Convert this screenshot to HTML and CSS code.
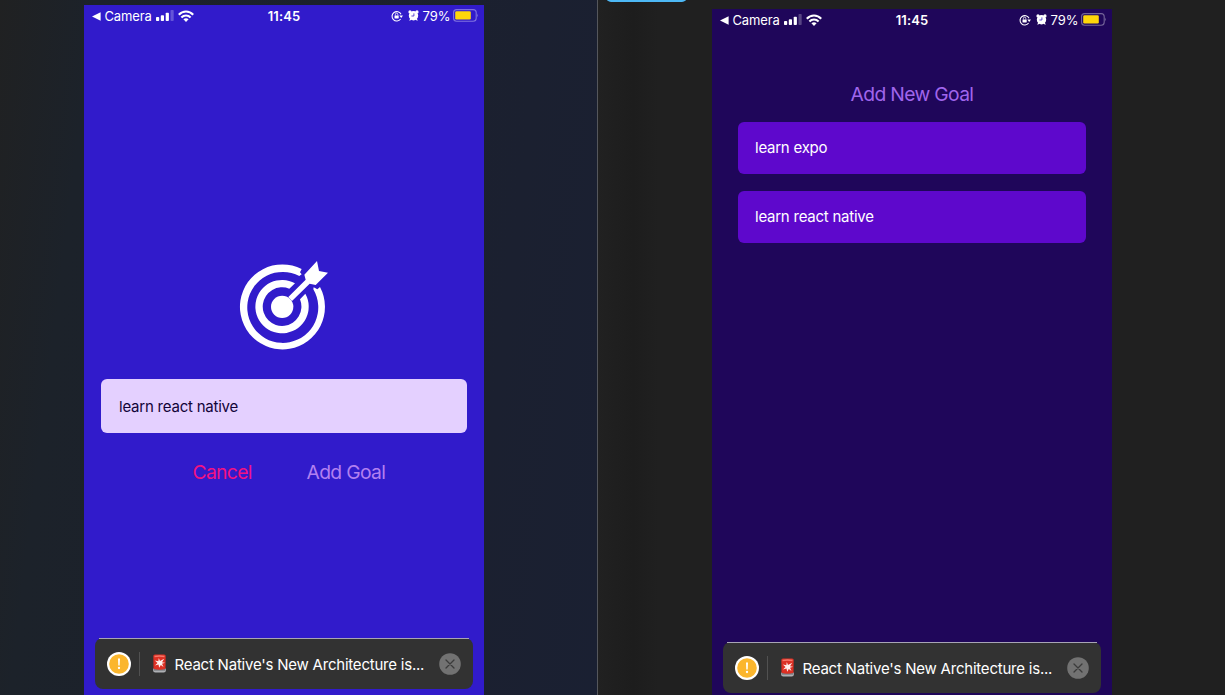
FILE: index.html
```
<!DOCTYPE html>
<html lang="en">
<head>
<meta charset="utf-8">
<title>Goals</title>
<link rel="stylesheet" href="styles.css">
</head>
<body>
<svg class="defs" aria-hidden="true">
  <symbol id="back" viewBox="0 0 9 9"><path d="M0 4.5 8.6 .3V8.7Z" fill="#fff"/></symbol>
  <symbol id="signal" viewBox="0 0 18 11" fill="#fff"><rect x="0" y="7" width="3.2" height="4" rx=".8"/><rect x="4.8" y="5.300" width="3.2" height="5.700" rx=".8"/><rect x="9.700" y="2.700" width="3.2" height="8.300" rx=".8"/><rect x="14.500" y="0" width="3.2" height="11" rx=".8" opacity=".25"/></symbol>
  <symbol id="wifi" viewBox="0 0 16 12"><path d="M.8 4.700C4.800 .4 11.200 .4 15.200 4.700M3.400 7.500C6 4.800 10 4.800 12.600 7.500" fill="none" stroke="#fff" stroke-width="2.100"/><path d="M5.400 9.300Q8 7.100 10.600 9.300L8 12Z" fill="#fff"/></symbol>
  <symbol id="lock" viewBox="0 0 12 12"><path d="M9.600 9A4.700 4.700 0 1 1 10 4.300" fill="none" stroke="#fff" stroke-width="1.100"/><path d="M8.300 5.400H12L10.200 8Z" fill="#fff"/><rect x="3.500" y="5.400" width="4.200" height="3.100" rx=".4" fill="#fff"/><path d="M4.400 5.500V4.400a1.200 1.200 0 0 1 2.400 0v1.100" fill="none" stroke="#fff" stroke-width=".8"/></symbol>
  <symbol id="alarm" viewBox="0 0 11 11"><circle cx="5.500" cy="5.700" r="4.700" fill="#fff"/><circle cx="2" cy="1.900" r="1.600" fill="#fff"/><circle cx="9" cy="1.900" r="1.600" fill="#fff"/><path d="M1.200 10.800l1-2.400 1.800 1.400ZM9.800 10.800l-1-2.400-1.800 1.400Z" fill="#fff"/><path d="M5.900 3.400V6H3.400" fill="none" stroke="#3a22c4" stroke-width=".8"/></symbol>
  <symbol id="battery" viewBox="0 0 26 13"><rect x=".6" y=".6" width="22.600" height="11.600" rx="3" fill="none" stroke="#fff" stroke-opacity=".38" stroke-width="1.100"/><rect x="2.200" y="2.200" width="15.600" height="8.400" rx="1.300" fill="#ffd60a"/><path d="M24.400 4.500q1.400 1.900 0 3.800Z" fill="#fff" opacity=".45"/></symbol>
  <symbol id="warn" viewBox="0 0 24 24"><circle cx="12" cy="12" r="12" fill="#fff"/><circle cx="12" cy="12" r="9.800" fill="#fbb62d"/><path d="M11 6.500h2l-.3 6.900h-1.400Z" fill="#fff"/><circle cx="12" cy="16" r="1.150" fill="#fff"/></symbol>
  <symbol id="siren" viewBox="0 0 14 19"><path d="M.6 14.500h12.800v1.800q0 2.200-2.200 2.200H2.800Q.6 18.500.6 16.300Z" fill="#aeb0b4"/><path d="M1.200 15.400h11.600v1H1.200Z" fill="#555960"/><path d="M.8 2Q.8.5 2.400.5h9.200Q13.200.5 13.200 2l-.2 12.800Q7 16.500 1 14.800Z" fill="#dd3024"/><path d="M2 1.700Q7 .7 12 1.700v1.500Q7 2.200 2 3.200Z" fill="#f7776a"/><path d="m7.500 7 4.200-2.200-2.200 3.500 3 .5-3 1 1.500 3.200L8.300 11l-1.600 2.800L6 10.600l-3.500 1 2.500-2.700L2.300 6.500l3.500.8.500-3.200Z" fill="#fff0ed"/></symbol>
  <symbol id="close" viewBox="0 0 22 22"><circle cx="11" cy="11" r="10.800" fill="#727272"/><path d="m7 7 8 8M15 7l-8 8" stroke="#3b3b3b" stroke-width="1.300" stroke-linecap="round"/></symbol>
</svg>

<div class="desktop">
  <section class="pane pane-left">
    <div class="phone phone-modal">
      <div class="status">
        <div class="status-side"><svg class="i-back"><use href="#back"/></svg><span class="camera">Camera</span><svg class="i-signal"><use href="#signal"/></svg><svg class="i-wifi"><use href="#wifi"/></svg></div>
        <span class="time">11:45</span>
        <div class="status-side status-right"><svg class="i-lock"><use href="#lock"/></svg><svg class="i-alarm"><use href="#alarm"/></svg><span class="percent">79%</span><svg class="i-battery"><use href="#battery"/></svg></div>
      </div>
      <div class="modal">
        <svg class="goal" viewBox="0 0 330 330" fill="#fff">
          <path d="M215 57A127.500 127.500 0 1 0 270 111L262 118 251 112 250 118A106.500 106.500 0 1 1 208 78L215 73 210 67Z"/>
          <path d="M195 100A80 80 0 1 0 226 131L210 148A58 58 0 1 1 178 116Z"/>
          <circle cx="156.500" cy="170.500" r="33.500"/>
          <path d="M175 141 227 89 223 74 261 33 267 63 294 68 257 105 239 101 186 153Z"/>
        </svg>
        <div class="field"><span>learn react native</span></div>
        <div class="actions"><span class="cancel">Cancel</span><span class="add">Add Goal</span></div>
      </div>
      <div class="toast"><svg class="i-warn"><use href="#warn"/></svg><i class="rule"></i><svg class="i-siren"><use href="#siren"/></svg><span class="message">React Native's New Architecture is...</span><svg class="i-close"><use href="#close"/></svg></div>
    </div>
  </section>
  <section class="pane pane-right">
    <div class="tab"></div>
    <div class="phone phone-list">
      <div class="status">
        <div class="status-side"><svg class="i-back"><use href="#back"/></svg><span class="camera">Camera</span><svg class="i-signal"><use href="#signal"/></svg><svg class="i-wifi"><use href="#wifi"/></svg></div>
        <span class="time">11:45</span>
        <div class="status-side status-right"><svg class="i-lock"><use href="#lock"/></svg><svg class="i-alarm"><use href="#alarm"/></svg><span class="percent">79%</span><svg class="i-battery"><use href="#battery"/></svg></div>
      </div>
      <div class="list">
        <div class="heading"><span>Add New Goal</span></div>
        <div class="item"><span>learn expo</span></div>
        <div class="item"><span>learn react native</span></div>
      </div>
      <div class="toast"><svg class="i-warn"><use href="#warn"/></svg><i class="rule"></i><svg class="i-siren"><use href="#siren"/></svg><span class="message">React Native's New Architecture is...</span><svg class="i-close"><use href="#close"/></svg></div>
    </div>
  </section>
</div>
</body>
</html>
```
FILE: styles.css
```
* { box-sizing: border-box; }
body { margin: 0; font-family: Inter, "Liberation Sans", sans-serif; overflow: hidden; }
svg { display: block; flex: none; }
.defs { position: absolute; width: 0; height: 0; }
.desktop { display: flex; width: 1225px; height: 695px; overflow: hidden; }
.pane { position: relative; flex: none; height: 695px; overflow: hidden; }
.pane-left { width: 598px; padding: 5px 0 0 84px; border-right: 1px solid #55575c; background: linear-gradient(97deg, #202122 0%, #1c222a 14%, #1b2030 80%, #1a2032 100%); }
.pane-right { width: 627px; padding: 9px 0 0 114px; background: linear-gradient(90deg, #212121 0, #1d1d1d 35px, #202020 60px, #202020 100%); }
.tab { position: absolute; left: 8px; top: -8px; width: 81px; height: 10px; border-radius: 5px; background: #4db8f5; }
.phone { display: flex; flex-direction: column; width: 400px; height: 695px; color: #fff; }
.phone-modal { background: #311bcb; }
.phone-list { background: #1f065a; }

.status { display: grid; grid-template-columns: 1fr auto 1fr; align-items: center; height: 22px; flex: none; font-size: 13px; line-height: 22px; }
.status-side { display: flex; align-items: center; padding-left: 7.500px; }
.status-right { justify-content: flex-end; padding: 0 5.500px 0 0; }
.i-back { width: 9px; height: 9px; margin-right: 4px; }
.camera { width: 51px; letter-spacing: -.15px; }
.i-signal { width: 18px; height: 11px; margin-top: -1px; }
.i-wifi { width: 16px; height: 12px; margin-left: 4.500px; margin-top: -1px; }
.time { font-weight: 600; letter-spacing: .15px; }
.i-lock { width: 12px; height: 12px; margin-right: 5px; }
.i-alarm { width: 11px; height: 11px; margin-right: 4px; margin-top: -1px; }
.percent { width: 30px; }
.i-battery { width: 26px; height: 13px; margin-top: -1px; }

.modal { display: flex; flex-direction: column; align-items: center; height: 611px; padding-top: 223px; flex: none; }
.goal { width: 110px; height: 110px; margin-left: 2px; }
.field { display: flex; align-items: center; width: 366px; height: 54.400px; margin-top: 19px; padding-left: 18px; border-radius: 6px; background: #e4d0ff; color: #120438; font-size: 15px; letter-spacing: -.22px; }
.actions { display: flex; width: 100%; margin-top: 26px; font-size: 19.300px; line-height: 26px; letter-spacing: -.65px; }
.cancel { width: 114px; margin-left: 108.500px; color: #f31282; }
.add { color: #b180f0; }

.list { height: 611px; padding: 50px 26px 0; flex: none; }
.heading { height: 26px; margin-bottom: 15px; color: #a065ec; font-size: 19.300px; line-height: 26px; letter-spacing: -.65px; text-align: center; }
.item { display: flex; align-items: center; height: 52px; margin-bottom: 17px; padding: 0 0 1px 17px; border-radius: 6px; background: #5e08cc; font-size: 15px; letter-spacing: -.24px; }

.toast { position: relative; display: flex; align-items: center; flex: none; width: 378px; height: 51px; margin-left: 11px; padding-left: 12px; border-radius: 8px; background: #323232; font-size: 15px; letter-spacing: -.22px; }
.toast::before { content: ""; position: absolute; left: 4px; right: 4px; top: 0; height: 1px; background: #a8a5b5; }
.i-warn { width: 24px; height: 24px; }
.rule { width: 1px; height: 24px; margin: 0 12px 0 8px; background: #515151; }
.i-siren { width: 15px; height: 19px; margin-right: 7.500px; }
.message { width: 264.500px; padding-top: 1px; white-space: nowrap; }
.i-close { width: 22px; height: 22px; }
```
